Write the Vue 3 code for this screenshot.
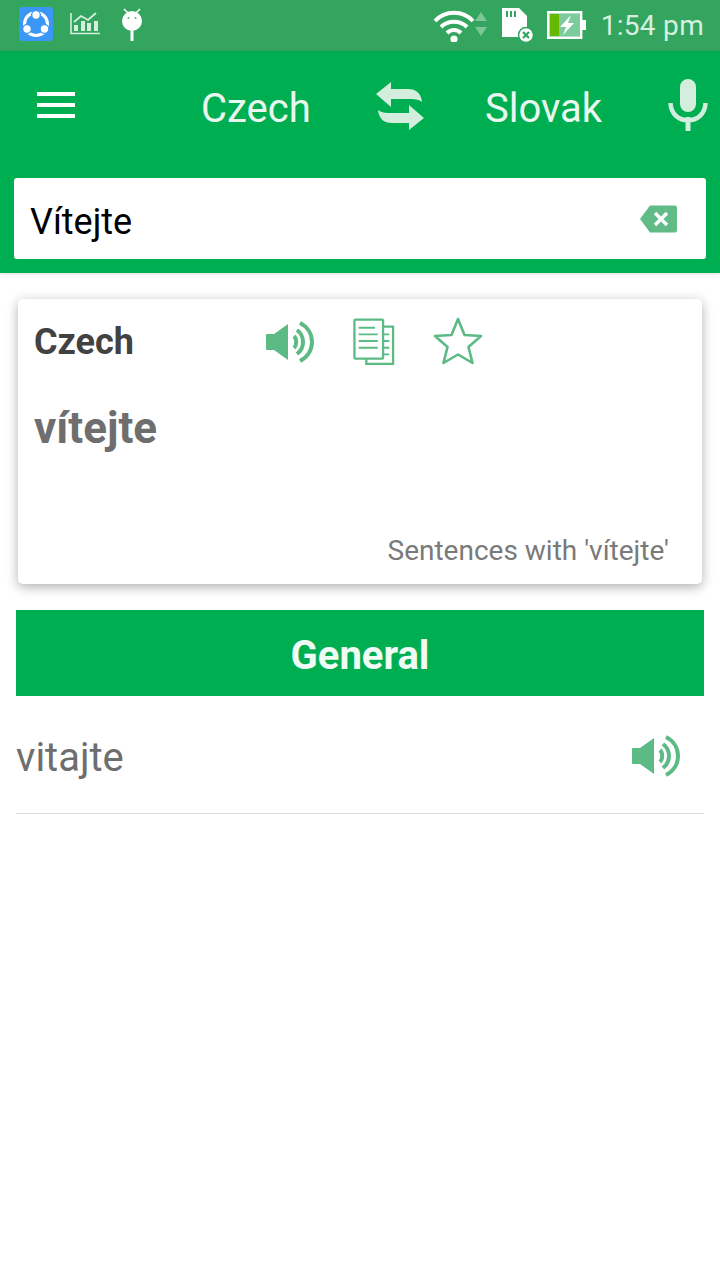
<template>
  <div class="screen">
    <div class="status-bar">
      <div class="status-left">
        <svg width="34" height="34" viewBox="0 0 34 34">
          <rect width="34" height="34" rx="4" fill="#3a97f5" />
          <circle cx="17" cy="17" r="11.5" fill="none" stroke="#fff" stroke-width="3" />
          <circle cx="17" cy="8" r="4.4" fill="#fff" stroke="#3a97f5" stroke-width="1.4" />
          <circle cx="8" cy="22" r="4.4" fill="#fff" stroke="#3a97f5" stroke-width="1.4" />
          <circle cx="25.5" cy="22" r="4.4" fill="#fff" stroke="#3a97f5" stroke-width="1.4" />
        </svg>
        <svg width="30" height="24" viewBox="0 0 30 24">
          <path d="M1 1V21.5H30" fill="none" stroke="#d5efdd" stroke-width="1.6" />
          <path d="M4 19V13H8V19ZM11 19V9H15V19ZM17 19V11H21V19ZM24 19V9H28V19Z" fill="#d5efdd" />
          <path d="M4 10L11 4L18 8L26 1" fill="none" stroke="#d5efdd" stroke-width="1.8" />
        </svg>
        <svg class="ic-android" width="22" height="34" viewBox="0 0 22 34">
          <path d="M3 2L7 6M19 2L15 6" stroke="#fff" stroke-width="1.6" />
          <circle cx="11" cy="14" r="10" fill="#fff" />
          <circle cx="7.5" cy="11" r="1.1" fill="#6fb98b" />
          <circle cx="14.5" cy="11" r="1.1" fill="#6fb98b" />
          <rect x="9.5" y="23" width="3" height="11" fill="#fff" />
        </svg>
      </div>
      <div class="status-right">
        <svg width="58" height="34" viewBox="0 0 58 34">
          <path d="M2 13C12 2 30 2 40 13M8 19C15 12 27 12 34 19M14 25C18 21 24 21 28 25" fill="none" stroke="#fff" stroke-width="4" />
          <circle cx="21" cy="31" r="3.6" fill="#fff" />
          <path d="M42 13L48 4L54 13ZM42 19L48 28L54 19Z" fill="#7cc594" />
        </svg>
        <svg class="ic-sd" width="34" height="36" viewBox="0 0 34 36">
          <path d="M1 1H18L26 9V30H1Z" fill="#fff" />
          <path d="M6 4V10M10 4V10M14 4V10" stroke="#33a55e" stroke-width="2" />
          <circle cx="25" cy="28" r="7.5" fill="#fff" stroke="#33a55e" stroke-width="1.5" />
          <path d="M22 25L28 31M28 25L22 31" stroke="#33a55e" stroke-width="2.2" />
        </svg>
        <svg class="ic-battery" width="40" height="28" viewBox="0 0 40 28">
          <rect x="1.2" y="1.2" width="33" height="25.6" fill="#7ccb9a" stroke="#fff" stroke-width="2.4" />
          <rect x="3" y="3" width="9" height="22" fill="#66b800" />
          <path d="M24 4L13 16H19L16 24L27 12H21Z" fill="#fff" />
          <rect x="35" y="9" width="4" height="10" fill="#fff" />
        </svg>
        <span class="clock">1:54 pm</span>
      </div>
    </div>

    <header class="app-header">
      <div class="lang-row">
        <div class="burger"><span></span><span></span><span></span></div>
        <span class="lang lang-from">Czech</span>
        <svg class="swap" width="50" height="50" viewBox="0 0 50 50">
          <path d="M1 13L16 1V8H33C41 8 46 12 47 21C43 18 39 18 33 18H16V26Z" fill="#d3eedd" />
          <path d="M49 37L34 49V42H17C9 42 4 38 3 29C7 32 11 32 17 32H34V24Z" fill="#d3eedd" />
        </svg>
        <span class="lang lang-to">Slovak</span>
        <svg class="mic" width="40" height="52" viewBox="0 0 40 52">
          <rect x="12" y="0" width="16" height="33" rx="8" fill="#d3eedd" />
          <path d="M2.5 24C3 47 37 47 37.5 24" fill="none" stroke="#d3eedd" stroke-width="4.5" />
          <rect x="17.5" y="38" width="5" height="14" fill="#d3eedd" />
        </svg>
      </div>
      <div class="search-box">
        <span class="search-text">Vítejte</span>
        <svg width="37" height="28" viewBox="0 0 37 28">
          <path d="M10 0.5H35C36 0.5 37 1.5 37 2.5V25.5C37 26.5 36 27.5 35 27.5H10L0 14Z" fill="#60bb87" />
          <path d="M15 8L27 20M27 8L15 20" stroke="#fff" stroke-width="3.4" />
        </svg>
      </div>
    </header>

    <section class="word-card">
      <div class="card-top">
        <span class="card-lang">Czech</span>
        <svg width="48" height="46" viewBox="0 0 48 46">
          <path d="M1 15H8L22 5V41L8 31H1C0.5 31 0 30.5 0 30V16C0 15.5 0.5 15 1 15Z" fill="#5cba85" />
          <path d="M28 17C31 20 31 26 28 29M31 11C39 17 39 29 31 35M34 4C50 12 50 34 34 42" fill="none" stroke="#5cba85" stroke-width="4" />
        </svg>
        <svg class="copy" width="42" height="48" viewBox="0 0 44 50">
          <path d="M14 40V48H42V9H32" fill="none" stroke="#5cba85" stroke-width="2.4" />
          <rect x="1.5" y="1.5" width="30" height="41" rx="1" fill="#fff" stroke="#5cba85" stroke-width="2.4" />
          <path d="M6 10H23M6 17H26M6 24H26M6 31H26M32 17H38M32 24H38M32 31H38M32 38H38" stroke="#5cba85" stroke-width="2" />
        </svg>
        <svg class="star" width="50" height="48" viewBox="0 0 50 48">
          <path d="M25 2L31.5 18L48 19L35.5 30L39.5 46L25 37.5L10.5 46L14.5 30L2 19L18.5 18Z" fill="none" stroke="#5cba85" stroke-width="2.6" stroke-linejoin="round" />
        </svg>
      </div>
      <div class="card-word">vítejte</div>
      <div class="card-link">Sentences with 'vítejte'</div>
    </section>

    <div class="category">General</div>

    <div class="result-row">
      <span class="result-text">vitajte</span>
      <svg class="result-speaker" width="48" height="46" viewBox="0 0 48 46">
        <path d="M1 15H8L22 5V41L8 31H1C0.5 31 0 30.5 0 30V16C0 15.5 0.5 15 1 15Z" fill="#5cba85" />
        <path d="M28 17C31 20 31 26 28 29M31 11C39 17 39 29 31 35M34 4C50 12 50 34 34 42" fill="none" stroke="#5cba85" stroke-width="4" />
      </svg>
    </div>
  </div>
</template>

<script setup>
</script>

<style>
html, body {
  margin: 0;
  background: #fff;
}
</style>

<style scoped>
.screen {
  width: 720px;
  height: 1280px;
  overflow: hidden;
  background: #fff;
  font-family: Roboto, "Liberation Sans", sans-serif;
}

.status-bar {
  height: 51px;
  box-sizing: border-box;
  padding: 6px 16px 0 19px;
  background: #33a55e;
  display: flex;
  justify-content: space-between;
  align-items: flex-start;
}

.status-left {
  display: flex;
  align-items: center;
  gap: 17px;
  height: 36px;
}

.ic-android {
  margin-left: 4px;
}

.status-right {
  display: flex;
  align-items: center;
  height: 38px;
}

.ic-sd {
  margin-left: 10px;
}

.ic-battery {
  margin-left: 12px;
}

.clock {
  margin-left: 14px;
  font-size: 28px;
  color: #d8efe0;
  letter-spacing: 0.3px;
}

.app-header {
  height: 222px;
  box-sizing: border-box;
  padding: 30px 14px 14px;
  background: #00ae52;
  box-shadow: 0 1px 3px rgba(0, 0, 0, 0.15);
  display: flex;
  flex-direction: column;
  justify-content: space-between;
}

.lang-row {
  position: relative;
  height: 52px;
}

.burger {
  position: absolute;
  left: 23px;
  top: 11px;
  width: 38px;
  display: flex;
  flex-direction: column;
  gap: 7px;
}

.burger span {
  height: 4px;
  background: #fff;
}

.lang {
  position: absolute;
  top: 5px;
  font-size: 40px;
  line-height: 46px;
  color: #e9f8ef;
}

.lang-from {
  left: 187px;
}

.lang-to {
  left: 471px;
}

.swap {
  position: absolute;
  left: 361px;
  top: 0;
}

.mic {
  position: absolute;
  left: 654px;
  top: -2px;
}

.search-box {
  height: 81px;
  box-sizing: border-box;
  padding: 0 29px 0 16px;
  background: #fff;
  border-radius: 3px;
  display: flex;
  align-items: center;
  justify-content: space-between;
}

.search-text {
  margin-top: 6px;
  font-size: 36px;
  color: #000;
}

.word-card {
  height: 285px;
  box-sizing: border-box;
  margin: 26px 18px 0;
  padding: 18px 33px 0 16px;
  background: #fff;
  border-radius: 5px;
  box-shadow: 0 3px 12px rgba(0, 0, 0, 0.32);
}

.card-top {
  display: flex;
  align-items: center;
  height: 50px;
}

.card-lang {
  width: 232px;
  font-size: 36px;
  font-weight: 700;
  color: #424242;
}

.copy {
  margin-left: 39px;
}

.star {
  margin-left: 38px;
  margin-top: -3px;
}

.card-word {
  margin-top: 36px;
  font-size: 44px;
  line-height: 50px;
  font-weight: 700;
  color: #6e6e6e;
}

.card-link {
  margin-top: 81px;
  text-align: right;
  font-size: 28px;
  color: #7a7a7a;
}

.category {
  height: 86px;
  margin: 26px 16px 0;
  background: #00ae52;
  color: #f1fbf5;
  font-size: 40px;
  font-weight: 700;
  line-height: 91px;
  text-align: center;
}

.result-row {
  height: 118px;
  box-sizing: border-box;
  margin: 0 16px;
  padding: 0 24px 0 0;
  border-bottom: 1px solid #dcdcdc;
  display: flex;
  align-items: center;
  justify-content: space-between;
}

.result-text {
  margin-top: 6px;
  font-size: 40px;
  color: #6e6e6e;
}

.result-speaker {
  margin-top: 3px;
}
</style>
